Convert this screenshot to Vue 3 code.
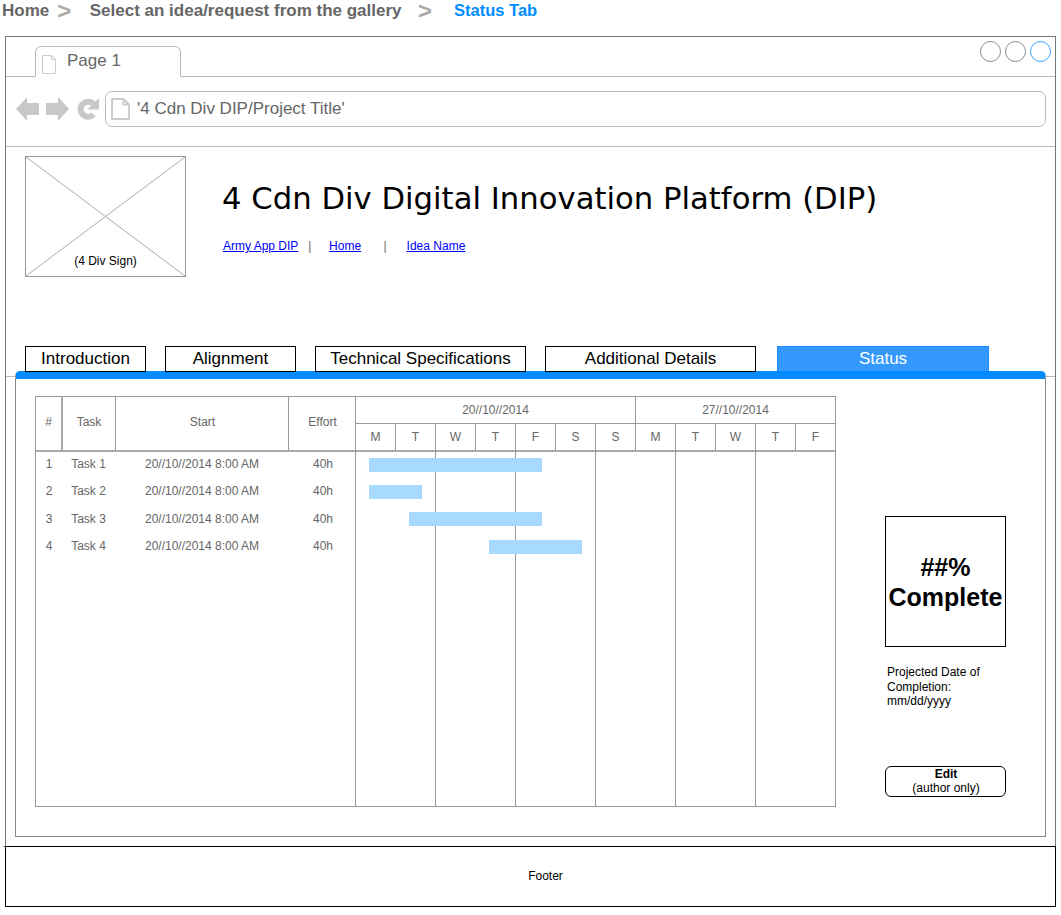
<template>
  <div class="page">
    <div class="crumbs">
      <span class="crumb home">Home</span>
      <span class="sep first">&gt;</span>
      <span class="crumb">Select an idea/request from the gallery</span>
      <span class="sep second">&gt;</span>
      <span class="crumb current">Status Tab</span>
    </div>

    <div class="window">
      <div class="tabbar">
        <div class="page-tab">
          <svg class="doc" width="14" height="19" viewBox="0 0 14 19">
            <path d="M0.5 0.5H9.5L13.5 4.5V18.5H0.5Z M9.5 0.5V4.5H13.5" fill="none" stroke="#ccc" />
          </svg>
          <span>Page 1</span>
        </div>
        <div class="dots">
          <i class="dot"></i>
          <i class="dot"></i>
          <i class="dot on"></i>
        </div>
      </div>

      <div class="addressbar">
        <svg class="nav" width="24" height="24" viewBox="0 0 24 24">
          <path d="M0 12L11 0V6H23V18H11V24Z" fill="#c8c8c8" />
        </svg>
        <svg class="nav" width="24" height="24" viewBox="0 0 24 24">
          <path d="M24 12L13 0V6H1V18H13V24Z" fill="#c8c8c8" />
        </svg>
        <svg class="nav reload" width="22" height="24" viewBox="0 0 22 24">
          <path d="M16.5 7A7.5 7.5 0 1 0 16.5 17.5" fill="none" stroke="#c8c8c8" stroke-width="6" />
          <path d="M22 1V12.5H10.5Z" fill="#c8c8c8" />
        </svg>
        <div class="url">
          <svg width="19" height="22" viewBox="0 0 19 22">
            <path d="M1 1H12.5L18 6.5V21H1Z M12.5 1V6.5H18" fill="none" stroke="#ccc" stroke-width="2" />
          </svg>
          <span>'4 Cdn Div DIP/Project Title'</span>
        </div>
      </div>

      <header class="head">
        <div class="logo">
          <svg class="cross" viewBox="0 0 159 119" preserveAspectRatio="none">
            <path d="M0 0L159 119M159 0L0 119" stroke="#aaa" fill="none" />
          </svg>
          <span>(4 Div Sign)</span>
        </div>
        <div class="head-text">
          <h1>4 Cdn Div Digital Innovation Platform (DIP)</h1>
          <nav class="links">
            <a href="#">Army App DIP</a>
            <span class="bar">|</span>
            <a href="#">Home</a>
            <span class="bar wide">|</span>
            <a href="#">Idea Name</a>
          </nav>
        </div>
      </header>

      <div class="tabs-wrap">
        <div class="tabs">
          <div v-for="t in tabs" :key="t.label" class="tab" :class="[t.cls, { active: t.active }]">{{ t.label }}</div>
        </div>

        <section class="panel">
          <div class="gantt">
            <div class="g-head">
              <div class="hc c-num">#</div>
              <div class="hc c-task">Task</div>
              <div class="hc c-start">Start</div>
              <div class="hc c-effort">Effort</div>
              <div class="timeline">
                <div class="weeks">
                  <div class="week w1">20//10//2014</div>
                  <div class="week w2">27//10//2014</div>
                </div>
                <div class="days">
                  <div v-for="(d, i) in days" :key="i" class="day">{{ d }}</div>
                </div>
              </div>
            </div>
            <div class="g-body">
              <div class="lines">
                <i v-for="n in 6" :key="n"></i>
              </div>
              <div v-for="r in rows" :key="r.id" class="row">
                <div class="cell c-num">{{ r.id }}</div>
                <div class="cell c-task">{{ r.task }}</div>
                <div class="cell c-start">20//10//2014 8:00 AM</div>
                <div class="cell c-effort">40h</div>
                <div class="track">
                  <div class="g-bar" :style="{ marginLeft: r.from + 'px', width: r.len + 'px' }"></div>
                </div>
              </div>
            </div>
          </div>

          <aside class="side">
            <div class="complete">##%<br />Complete</div>
            <p class="projected">Projected Date of<br />Completion:<br />mm/dd/yyyy</p>
            <button type="button" class="edit"><b>Edit</b><br />(author only)</button>
          </aside>
        </section>
      </div>
    </div>

    <footer class="footer">Footer</footer>
  </div>
</template>

<script setup>
const tabs = [
  { label: 'Introduction', cls: 't1' },
  { label: 'Alignment', cls: 't2' },
  { label: 'Technical Specifications', cls: 't3' },
  { label: 'Additional Details', cls: 't4' },
  { label: 'Status', cls: 't5', active: true },
];

const days = ['M', 'T', 'W', 'T', 'F', 'S', 'S', 'M', 'T', 'W', 'T', 'F'];

// from / len are pixel offsets inside the timeline column
const rows = [
  { id: 1, task: 'Task 1', from: 13, len: 173 },
  { id: 2, task: 'Task 2', from: 13, len: 53 },
  { id: 3, task: 'Task 3', from: 53, len: 133 },
  { id: 4, task: 'Task 4', from: 133, len: 93 },
];
</script>

<style>
html,
body {
  background: #fff;
}
</style>

<style scoped>
.page {
  width: 1061px;
  height: 915px;
  font-family: "Liberation Sans", Arial, sans-serif;
  color: #000;
  overflow: hidden;
}

.crumbs {
  display: flex;
  align-items: center;
  height: 21px;
  margin-bottom: 15px;
  padding-left: 2px;
  font-size: 17px;
  line-height: 21px;
  font-weight: bold;
  color: #666;
}
.crumb.current {
  margin-left: 22px;
  font-size: 16.5px;
  color: #008cff;
}
.sep {
  font-size: 24px;
  line-height: 21px;
  font-weight: bold;
  color: #aaa;
}
.sep.first {
  margin-left: 8px;
  margin-right: 18.5px;
}
.sep.second {
  margin-left: 16.5px;
}

.window {
  width: 1051px;
  height: 811px;
  margin-left: 5px;
  box-sizing: border-box;
  border: 1px solid #777;
  border-bottom: 0;
}

.tabbar {
  display: flex;
  justify-content: space-between;
  height: 40px;
  box-sizing: border-box;
  border-bottom: 1px solid #bbb;
  padding: 9px 4px 0 29px;
}
.page-tab {
  display: flex;
  align-items: center;
  gap: 11px;
  width: 146px;
  height: 31px;
  box-sizing: border-box;
  padding: 0 0 2px 6px;
  background: #fff;
  border: 1px solid #bbb;
  border-bottom: 0;
  border-radius: 6px 6px 0 0;
  font-size: 17px;
  color: #666;
}
.page-tab .doc {
  margin-top: 6px;
}
.dots {
  display: flex;
  gap: 4px;
  margin-top: -5px;
}
.dot {
  display: block;
  width: 21px;
  height: 21px;
  box-sizing: border-box;
  border: 1px solid #888;
  border-radius: 50%;
}
.dot.on {
  border-color: #3aa0ff;
}

.addressbar {
  display: flex;
  align-items: center;
  height: 70px;
  box-sizing: border-box;
  border-bottom: 1px solid #bbb;
  padding: 0 9px 6px 10px;
}
.nav {
  flex: none;
  margin-right: 5px;
}
.nav.reload {
  margin-left: 3px;
  margin-right: 6px;
}
.url {
  flex: 1;
  display: flex;
  align-items: center;
  gap: 7px;
  height: 36px;
  box-sizing: border-box;
  padding-left: 5px;
  border: 1px solid #bbb;
  border-radius: 7px;
  font-size: 17px;
  color: #666;
}

.head {
  display: flex;
  height: 199px;
  box-sizing: border-box;
  padding: 9px 0 0 19px;
}
.logo {
  position: relative;
  display: flex;
  align-items: flex-end;
  justify-content: center;
  width: 161px;
  height: 121px;
  box-sizing: border-box;
  border: 1px solid #999;
  padding-bottom: 8px;
  font-size: 12px;
}
.logo span {
  position: relative;
}
.cross {
  position: absolute;
  left: 0;
  top: 0;
  width: 100%;
  height: 100%;
}
.head-text {
  margin-left: 36px;
}
h1 {
  margin: 25px 0 0;
  font-family: "DejaVu Sans", Verdana, sans-serif;
  font-size: 30.7px;
  font-weight: normal;
  line-height: 36px;
}
.links {
  display: flex;
  align-items: center;
  margin: 22px 0 0 1px;
  font-size: 12px;
  line-height: 14px;
}
.links a {
  color: #0000ff;
}
.bar {
  margin: 0 17.6px 0 10px;
  color: #666;
}
.bar.wide {
  margin: 0 20px 0 22.4px;
}

.tabs-wrap {
  position: relative;
}
.tabs-wrap::before {
  content: "";
  position: absolute;
  left: 0;
  right: 0;
  top: 30px;
  border-top: 1px solid #bbb;
}
.tabs {
  position: relative;
  z-index: 1;
  display: flex;
  height: 26px;
  margin: 0 0 -1px 19px;
  font-size: 17px;
}
.tab {
  box-sizing: border-box;
  height: 26px;
  border: 1px solid #000;
  background: #fff;
  text-align: center;
  line-height: 23px;
}
.t1 { width: 121px; margin-right: 19px; }
.t2 { width: 131px; margin-right: 19px; }
.t3 { width: 211px; margin-right: 19px; }
.t4 { width: 211px; margin-right: 21px; }
.t5 { width: 212px; }
.tab.active {
  height: 25px;
  background: #3399ff;
  border-color: #1a8cff;
  border-bottom: 0;
  color: #fff;
}

.panel {
  position: relative;
  display: flex;
  width: 1031px;
  height: 466px;
  margin-left: 9px;
  box-sizing: border-box;
  padding: 17px 0 0 19px;
  background: #fff;
  border: 1px solid #888;
  border-top: 8px solid #008cff;
  border-radius: 5px 5px 0 0;
}

.gantt {
  flex: none;
  display: flex;
  flex-direction: column;
  width: 801px;
  height: 411px;
  box-sizing: border-box;
  border: 1px solid #999;
  font-size: 12px;
  color: #666;
}
.c-num { width: 27px; }
.c-task { width: 53px; }
.c-start { width: 174px; }
.c-effort { width: 66px; }
.g-head {
  flex: none;
  display: flex;
  height: 55px;
  box-sizing: border-box;
  border-bottom: 2px solid #aaa;
}
.hc {
  display: flex;
  align-items: center;
  justify-content: center;
  box-sizing: border-box;
  padding-bottom: 3px;
  border-right: 1px solid #999;
}
.hc.c-num {
  border-right: 2px solid #aaa;
}
.hc.c-start {
  width: 173px;
  padding-left: 1px;
}
.hc.c-effort {
  width: 67px;
  padding-left: 1px;
}
.timeline {
  flex: 1;
  display: flex;
  flex-direction: column;
}
.weeks {
  display: flex;
  height: 27px;
  border-bottom: 1px solid #999;
  box-sizing: border-box;
}
.week {
  display: flex;
  align-items: center;
  justify-content: center;
  box-sizing: border-box;
}
.w1 {
  width: 280px;
  border-right: 1px solid #999;
}
.w2 {
  flex: 1;
}
.days {
  flex: 1;
  display: grid;
  grid-template-columns: repeat(11, 40px) 39px;
}
.day {
  display: flex;
  align-items: center;
  justify-content: center;
  box-sizing: border-box;
  border-right: 1px solid #999;
}
.day:last-child {
  border-right: 0;
}

.g-body {
  position: relative;
  flex: 1;
}
.lines {
  position: absolute;
  left: 319px;
  top: -1px;
  bottom: 0;
  display: flex;
}
.lines i {
  display: block;
  box-sizing: border-box;
  width: 80px;
  border-left: 1px solid #999;
}
.row {
  position: relative;
  top: -1px;
  display: flex;
  align-items: center;
  height: 27.3px;
  text-align: center;
}
.cell {
  box-sizing: border-box;
  padding-bottom: 1px;
}
.cell.c-num {
  width: 26px;
}
.cell.c-effort {
  padding-left: 2px;
}
.track {
  flex: 1;
  margin-left: 1px;
}
.g-bar {
  height: 14px;
  background: #a8daff;
}

.side {
  display: flex;
  flex-direction: column;
  margin-left: 49px;
  width: 121px;
  padding-top: 120px;
}
.complete {
  display: flex;
  align-items: center;
  justify-content: center;
  width: 121px;
  height: 131px;
  box-sizing: border-box;
  border: 1px solid #000;
  font-size: 25px;
  font-weight: bold;
  line-height: 30px;
  text-align: center;
}
.projected {
  margin: 18px 0 0 2px;
  font-size: 12px;
  line-height: 14.5px;
}
.edit {
  width: 121px;
  height: 31px;
  margin-top: 57px;
  padding: 0 0 0 1px;
  background: #fff;
  border: 1px solid #000;
  border-radius: 6px;
  font-family: inherit;
  font-size: 12px;
  line-height: 14px;
  color: #000;
}

.footer {
  position: relative;
  display: flex;
  align-items: center;
  justify-content: center;
  width: 1051px;
  height: 61px;
  margin: -1px 0 0 5px;
  box-sizing: border-box;
  border: 1px solid #000;
  padding: 0 0 1px 30px;
  background: #fff;
  font-size: 12px;
}
.footer::before {
  content: "";
  position: absolute;
  left: -3px;
  top: -1px;
  width: 2px;
  border-top: 1px solid #888;
}
</style>
